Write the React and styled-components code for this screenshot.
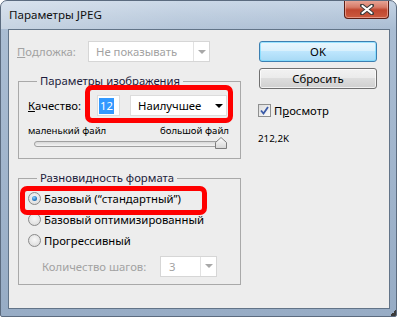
import React from 'react';
import styled, { createGlobalStyle } from 'styled-components';

const GlobalStyle = createGlobalStyle`
  html, body {
    margin: 0;
    padding: 0;
    background: #ffffff;
  }
  body {
    font-family: "Noto Sans", "DejaVu Sans", sans-serif;
    font-size: 11.3px;
  }
`;

const Window = styled.div`
  position: relative;
  box-sizing: border-box;
  width: 397px;
  height: 317px;
  display: flex;
  flex-direction: column;
  border: 1px solid #5b6b7f;
  border-radius: 7px 7px 2px 2px;
  background: linear-gradient(to bottom, #c4d3e4 0px, #aabdd3 28px, #97acc5 100%);
  overflow: hidden;
`;

const TitleBar = styled.div`
  height: 28px;
  display: flex;
  align-items: flex-start;
  justify-content: space-between;
  padding: 0 7px 0 8px;
  background: linear-gradient(to right, rgba(255, 255, 255, 0.35) 0%, rgba(255, 255, 255, 0.12) 45%, rgba(255, 255, 255, 0) 100%);
`;

const Title = styled.div`
  margin-top: 6px;
  color: #111;
  font-size: 11.6px;
  line-height: 16px;
`;

const CloseButton = styled.div`
  width: 45px;
  height: 19px;
  margin-top: -1px;
  box-sizing: border-box;
  border: 1px solid #5c1e15;
  border-top: none;
  border-radius: 0 0 4px 4px;
  background: linear-gradient(to bottom, #e9aa9c 0%, #d77b68 40%, #c0462f 55%, #cc5a3f 100%);
  box-shadow: inset 0 0 0 1px rgba(255, 210, 200, 0.5);
  display: flex;
  align-items: center;
  justify-content: center;
`;

const Client = styled.div`
  box-sizing: border-box;
  width: 382px;
  height: 280px;
  margin-left: 7px;
  border: 1px solid #627488;
  background: #ededed;
  display: flex;
  gap: 18px;
  padding: 11px 12px 0 9px;
`;

const Grip = styled.div`
  position: absolute;
  right: 0;
  bottom: 0;
  width: 6px;
  height: 6px;
  background: linear-gradient(135deg, transparent 50%, #3a3a3a 50%);
`;

const LeftColumn = styled.div`
  width: 223px;
  display: flex;
  flex-direction: column;
`;

const RightColumn = styled.div`
  width: 118px;
  display: flex;
  flex-direction: column;
`;

const Row = styled.div`
  display: flex;
  align-items: center;
  height: ${(p) => p.$h || 21}px;
  margin-top: ${(p) => p.$mt || 0}px;
`;

const Label = styled.span`
  width: ${(p) => (p.$w ? `${p.$w}px` : 'auto')};
  color: ${(p) => (p.$disabled ? '#a2a2a2' : '#000')};
  white-space: nowrap;
  margin-left: ${(p) => p.$ml || 0}px;
`;

const Key = styled.span`
  text-decoration: underline;
`;

const Select = styled.div`
  box-sizing: border-box;
  display: flex;
  align-items: center;
  width: ${(p) => p.$w}px;
  height: 21px;
  border: 1px solid ${(p) => (p.$disabled ? '#d6d6d6' : '#dcdcdc')};
  background: #fff;
  color: ${(p) => (p.$disabled ? '#a2a2a2' : '#000')};
`;

const SelectText = styled.span`
  flex: 1;
  padding-left: ${(p) => p.$pl || 7}px;
  white-space: nowrap;
`;

const ArrowBox = styled.span`
  width: 15px;
  height: 100%;
  display: flex;
  align-items: center;
  justify-content: center;
  border-left: ${(p) => (p.$split ? '1px solid #e2e2e2' : 'none')};
`;

const Arrow = styled.span`
  width: 0;
  height: 0;
  border-left: 4px solid transparent;
  border-right: 4px solid transparent;
  border-top: 4px solid ${(p) => (p.$disabled ? '#a8a8a8' : '#000')};
`;

const NumberBox = styled.div`
  box-sizing: border-box;
  width: 23px;
  height: 21px;
  border: 1px solid #dcdcdc;
  background: #fff;
  display: flex;
  align-items: center;
  padding-left: 1px;
`;

const Selected = styled.span`
  background: #3399ff;
  color: #fff;
  line-height: 16px;
  padding: 0 1px;
`;

const Highlight = styled.div`
  position: relative;
  display: flex;
  align-items: center;
  gap: ${(p) => p.$gap || 0}px;

  &::after {
    content: '';
    position: absolute;
    left: ${(p) => p.$left}px;
    top: ${(p) => p.$top}px;
    width: ${(p) => p.$w}px;
    height: ${(p) => p.$h}px;
    box-sizing: border-box;
    border: 5px solid #ff0000;
    border-radius: 7px;
    filter: blur(0.6px);
    pointer-events: none;
  }
`;

const Group = styled.fieldset`
  margin: ${(p) => p.$mt || 0}px 0 0 0;
  padding: 0 11px ${(p) => p.$pb || 8}px 9px;
  min-width: 0;
  border: 1px solid #a9a9a9;
  border-radius: 0;
`;

const Legend = styled.legend`
  margin-left: 9px;
  padding: 0 3px;
  line-height: 16px;
  color: #1c1c3c;
`;

const SliderLabels = styled.div`
  display: flex;
  justify-content: space-between;
  margin-top: 8px;
  font-size: 9.6px;
  line-height: 13px;
  color: #000;
`;

const Slider = styled.div`
  position: relative;
  height: 12px;
  margin: 1px 4px 0 6px;
  display: flex;
  align-items: center;
`;

const Track = styled.div`
  flex: 1;
  height: 4px;
  border: 1px solid #a0a0a0;
  border-radius: 3px;
  background: linear-gradient(to bottom, #d8d8d8, #f4f4f4);
`;

const Thumb = styled.svg`
  position: absolute;
  right: -2px;
  top: -1px;
`;

const Radio = styled.span`
  box-sizing: border-box;
  width: 13px;
  height: 13px;
  border-radius: 50%;
  border: 1px solid #8a8a8a;
  background: radial-gradient(circle at 50% 40%, #f8f8f8 0%, #e4e4e4 60%, #d2d2d2 100%);
  display: flex;
  align-items: center;
  justify-content: center;
  margin-right: 3px;

  &::after {
    content: '';
    display: ${(p) => (p.$checked ? 'block' : 'none')};
    width: 5px;
    height: 5px;
    border-radius: 50%;
    background: radial-gradient(circle at 40% 35%, #8fd0ff 0%, #2a7fc6 55%, #0f4a84 100%);
  }
`;

const Button = styled.div`
  box-sizing: border-box;
  height: 21px;
  margin-top: ${(p) => p.$mt || 0}px;
  display: flex;
  align-items: center;
  justify-content: center;
  border-radius: 3px;
  color: #000;
  border: 1px solid ${(p) => (p.$primary ? '#3c7fb1' : '#707070')};
  background: ${(p) =>
    p.$primary
      ? 'linear-gradient(to bottom, #eaf6fd 0%, #d9f0fc 45%, #bee6fd 50%, #a7d9f5 100%)'
      : 'linear-gradient(to bottom, #f2f2f2 0%, #ebebeb 45%, #dddddd 50%, #cfcfcf 100%)'};
  box-shadow: inset 0 0 0 1px ${(p) => (p.$primary ? 'rgba(120, 220, 255, 0.7)' : 'rgba(255, 255, 255, 0.7)')};
`;

const CheckRow = styled.div`
  display: flex;
  align-items: center;
  gap: 3px;
  margin-top: 15px;
  height: 13px;
  margin-left: -1px;
`;

const Checkbox = styled.span`
  box-sizing: border-box;
  width: 13px;
  height: 13px;
  border: 1px solid #8e8f8f;
  background: linear-gradient(to bottom right, #dcdcdc, #fbfbfb);
  display: flex;
  align-items: center;
  justify-content: center;
`;

const FileSize = styled.div`
  margin-top: 15px;
  margin-left: -1px;
  font-size: 9.8px;
  line-height: 13px;
  color: #000;
`;

export default function App() {
  return (
    <>
      <GlobalStyle />
      <Window>
        <TitleBar>
          <Title>Параметры JPEG</Title>
          <CloseButton>
            <svg width="14" height="11" viewBox="0 0 14 11">
              <path d="M2 1.5 L12 9.5 M12 1.5 L2 9.5" stroke="#3b3b3b" strokeWidth="4" strokeLinecap="round" />
              <path d="M2.5 2 L11.5 9 M11.5 2 L2.5 9" stroke="#ffffff" strokeWidth="2.2" strokeLinecap="round" />
            </svg>
          </CloseButton>
        </TitleBar>
        <Client>
          <LeftColumn>
            <Row $h={21}>
              <Label $w={71} $disabled $ml={-1}>
                <Key>П</Key>одложка:
              </Label>
              <Select $w={122} $disabled>
                <SelectText $pl={7}>Не показывать</SelectText>
                <ArrowBox $split>
                  <Arrow $disabled />
                </ArrowBox>
              </Select>
            </Row>

            <Group $mt={11} $pb={8}>
              <Legend>Параметры изображения</Legend>
              <Row $mt={6}>
                <Label $w={69}>
                  <Key>К</Key>ачество:
                </Label>
                <Highlight $gap={10} $left={-12} $top={-10} $w={148} $h={38}>
                  <NumberBox>
                    <Selected>12</Selected>
                  </NumberBox>
                  <Select $w={97}>
                    <SelectText>Наилучшее</SelectText>
                    <ArrowBox>
                      <Arrow />
                    </ArrowBox>
                  </Select>
                </Highlight>
              </Row>
              <SliderLabels>
                <span>маленький файл</span>
                <span>большой файл</span>
              </SliderLabels>
              <Slider>
                <Track />
                <Thumb width="12" height="12" viewBox="0 0 12 12">
                  <defs>
                    <linearGradient id="thumbFill" x1="0" y1="0" x2="0" y2="1">
                      <stop offset="0" stopColor="#fdfdfd" />
                      <stop offset="1" stopColor="#d6d6d6" />
                    </linearGradient>
                  </defs>
                  <path d="M6 0.5 L11.5 5.5 L11.5 11.5 L0.5 11.5 L0.5 5.5 Z" fill="url(#thumbFill)" stroke="#7d7d7d" />
                </Thumb>
              </Slider>
            </Group>

            <Group $mt={11} $pb={8}>
              <Legend>Разновидность формата</Legend>
              <Row $mt={2}>
                <Highlight $left={-8} $top={-5} $w={187} $h={29}>
                  <Radio $checked />
                  <Label>Базовый (“стандартный”)</Label>
                </Highlight>
              </Row>
              <Row>
                <Radio />
                <Label>Базовый оптимизированный</Label>
              </Row>
              <Row>
                <Radio />
                <Label>Прогрессивный</Label>
              </Row>
              <Row $mt={5} $h={20}>
                <Label $w={118} $ml={14} $disabled>
                  Количество шагов:
                </Label>
                <Select $w={57} $disabled>
                  <SelectText $pl={8}>3</SelectText>
                  <ArrowBox $split>
                    <Arrow $disabled />
                  </ArrowBox>
                </Select>
              </Row>
            </Group>
          </LeftColumn>

          <RightColumn>
            <Button $primary>OK</Button>
            <Button $mt={6}>Сбросить</Button>
            <CheckRow>
              <Checkbox>
                <svg width="9" height="9" viewBox="0 0 9 9">
                  <path d="M1 4.5 L3.5 7.5 L8 1" fill="none" stroke="#3b5ba8" strokeWidth="1.8" />
                </svg>
              </Checkbox>
              <Label>
                П<Key>р</Key>осмотр
              </Label>
            </CheckRow>
            <FileSize>212,2K</FileSize>
          </RightColumn>
        </Client>
        <Grip />
      </Window>
    </>
  );
}
